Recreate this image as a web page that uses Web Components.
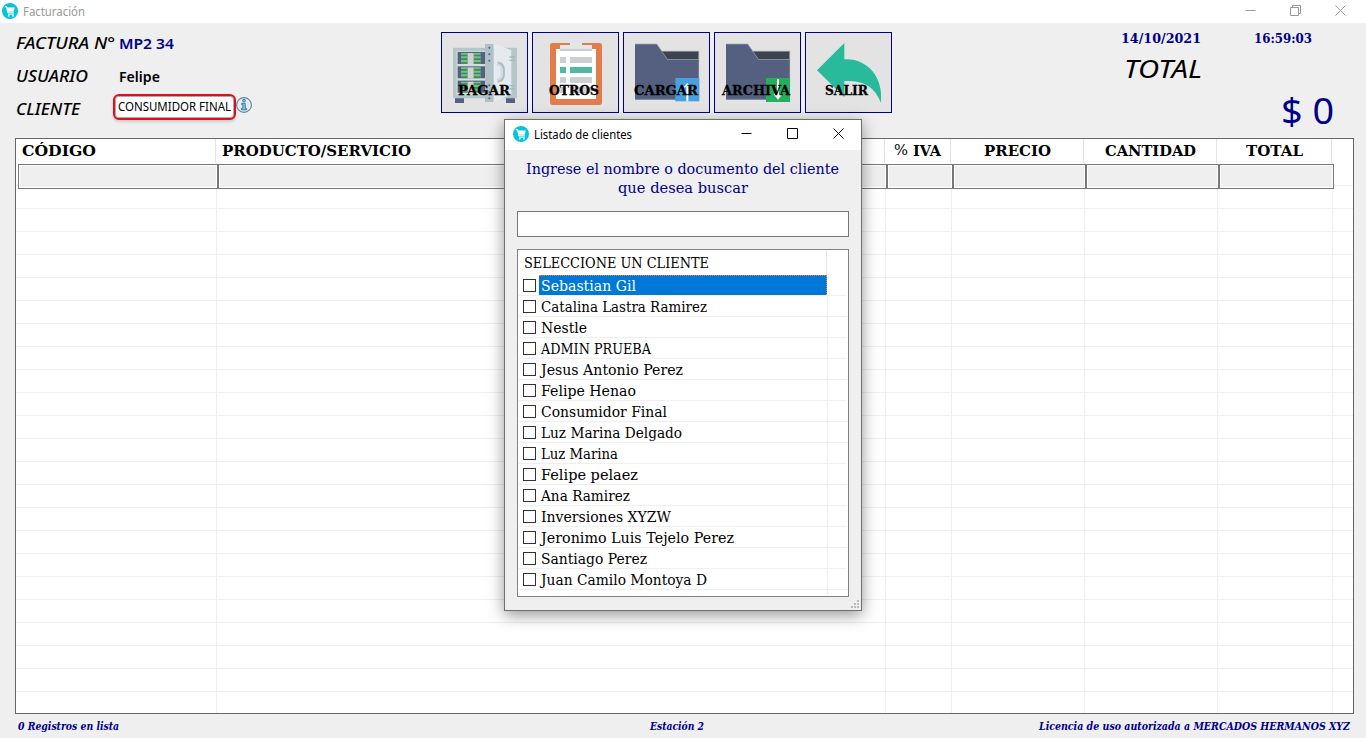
<!DOCTYPE html>
<html lang="es">
<head>
<meta charset="utf-8">
<title>Facturación</title>
<style>
html,body{margin:0;width:1366px;height:738px;overflow:hidden;background:#efefef}
</style>
</head>
<body>
<invoice-app></invoice-app>
<script>
const SLAB = '"DejaVu Serif",serif';
const SANS = '"Noto Sans","Open Sans",sans-serif';

function define(name, html, setup) {
  customElements.define(name, class extends HTMLElement {
    connectedCallback() {
      if (this.shadowRoot) return;
      const root = this.attachShadow({ mode: 'open' });
      const t = document.createElement('template');
      t.innerHTML = typeof html === 'function' ? html(this) : html;
      root.append(t.content.cloneNode(true));
      if (setup) setup(this, root);
    }
  });
}

/* A single line of text fitted to a given width. */
define('fit-text', `
<style>:host{display:block;white-space:nowrap;flex:none}span{display:inline-block;transform-origin:0 50%;vertical-align:top;white-space:pre}</style>
<span><slot></slot></span>`, (el, root) => {
  const w = +el.getAttribute('w');
  const s = root.querySelector('span');
  const n = s.getBoundingClientRect().width;
  el.style.width = w + 'px';
  if (n) s.style.transform = 'scaleX(' + w / n + ')';
});

define('cart-icon', `
<style>:host{display:block;width:16px;height:16px;flex:none}svg{display:block}</style>
<svg width="16" height="16" viewBox="0 0 16 16"><circle cx="8" cy="8" r="8" fill="#06c2da"/>
<path d="M2.8 3.6h1.7l1.4 6.2h6" fill="none" stroke="#fff" stroke-width="1.1"/><path d="M4.8 4.5h8l-1.2 4.2H5.8z" fill="#fff"/>
<path d="M6 11.2h6" stroke="#fff" stroke-width="1"/><circle cx="6.7" cy="12.8" r=".9" fill="#fff"/><circle cx="11" cy="12.8" r=".9" fill="#fff"/></svg>`);

define('info-icon', `
<style>:host{display:block;width:16px;height:16px}svg{display:block}</style>
<svg width="16" height="16" viewBox="0 0 16 16"><circle cx="8" cy="8" r="7.4" fill="#e4eef4" stroke="#5b87a5" stroke-width="1.1"/>
<circle cx="8" cy="3.7" r="1.4" fill="#8fc0de" stroke="#35688c" stroke-width=".8"/>
<path d="M5.6 6.3h3.7v5h1.3v1.6H5.4v-1.6h1.4V7.8H5.6z" fill="#8fc0de" stroke="#35688c" stroke-width=".8"/></svg>`);

const folder = `<path d="M36 36H101L133 82H228V203H36z" fill="#556080"/><path d="M36 36.5H101M133 82.5H227V202M36 202H160" stroke="#8b93a8" stroke-width="2" fill="none"/><path d="M116 58H227V81H133z" fill="#3e4350"/><path d="M116 57.5H227.5V81" fill="none" stroke="#a5a9b1" stroke-width="1.5"/><path d="M101 36L133 82" stroke="#8b93a8" stroke-width="2"/>`;
const bills = y => `<path d="M50 ${y}H134V${y + 36}H50z" fill="#556080"/><path d="M60 ${y + 3}H80V${y + 36}H60zM98 ${y + 3}H119V${y + 36}H98z" fill="#71c285"/>
<path d="M60 ${y + 8}H80V${y + 13}H60zM60 ${y + 19}H80V${y + 24}H60zM60 ${y + 30}H80V${y + 35}H60zM98 ${y + 8}H119V${y + 13}H98zM98 ${y + 19}H119V${y + 24}H98zM98 ${y + 30}H119V${y + 35}H98z" fill="#47855a"/><path d="M80 ${y + 3}H98V${y + 36}H80z" fill="#d0d3ce"/><path d="M50 ${y + 39}H134" stroke="#dce3e6" stroke-width="3"/>`;
const icons = {
  pagar: `<path d="M42 198H69V213H42zM195 198H222V213H195z" fill="#556080"/><rect x="36" y="47" width="192" height="152" rx="3" fill="#b3c6ca"/><path d="M46 56H134V189H46z" fill="#c9d6da"/>${bills(60)}${bills(103)}${bills(146)}
<path d="M132 36H158V210H132z" fill="#afc0c6"/><path d="M158 34L211 55V187L158 210z" fill="#e5eaee"/>
<g fill="#556080"><circle cx="145" cy="47" r="3"/><circle cx="145" cy="67" r="3"/><circle cx="145" cy="86" r="3"/><circle cx="145" cy="160" r="3"/><circle cx="145" cy="180" r="3"/><circle cx="145" cy="199" r="3"/></g>
<path d="M170 93C184 91 189 105 189 121S184 149 170 148" fill="none" stroke="#aebfc6" stroke-width="7"/><path d="M168 99C180 97 182 108 182 121S179 143 168 143" fill="none" stroke="#d0dade" stroke-width="5"/>
<path d="M205 75H221M205 85H221M205 161H221M205 171H221" stroke="#a5b9bf" stroke-width="4"/>`,
  otros: `<rect x="54" y="33" width="156" height="186" rx="8" fill="#e27c4b"/><path d="M72 51H192V201H72z" fill="#fff"/><path d="M84 39H114V27H150V39H180V57H84z" fill="#e4e7e9"/><path d="M84 51H180V57H84z" fill="#c9ccd0"/>
<path d="M84 75H102V93H84zM114 75H180V93H114zM84 135H102V153H84zM114 135H180V153H114zM84 165H102V183H84zM114 165H180V183H114z" fill="#ccd0d3"/><path d="M84 105H102V123H84zM114 105H180V123H114z" fill="#50baa1"/>`,
  cargar: folder + `<path d="M157 138H229V208H157z" fill="#48a0dc"/><path d="M193 208V156" stroke="#fff" stroke-width="6"/><path d="M184 166L193 156L202 166" fill="none" stroke="#fff" stroke-width="4"/>`,
  archiva: folder + `<path d="M156 138H228V210H156z" fill="#24ae5f"/><path d="M192 142V196" stroke="#fff" stroke-width="6"/><path d="M181 185L192 199L203 185" fill="none" stroke="#fff" stroke-width="5"/>`,
  salir: `<path d="M36 115L118 33V82C184 78 236 132 228 212C208 162 173 144 118 147V196z" fill="#29ba9b"/>`
};

define('tool-button', el => `
<style>:host{display:grid;width:87px;height:81px;box-sizing:border-box;border:1px solid #000088;background:#e3e3e3;font:bold 13.5px/18px ${SLAB};color:#000;-webkit-text-stroke:.3px}
svg{grid-area:1/1;margin:-1px}fit-text{grid-area:1/1;align-self:end;margin:0 0 13px ${el.getAttribute('inset')}px}</style>
<svg width="87" height="81" viewBox="0 0 261 243">${icons[el.getAttribute('icon')]}</svg>
<fit-text w="${el.getAttribute('tw')}">${el.getAttribute('label')}</fit-text>`);

define('window-controls', el => {
  const sub = el.hasAttribute('dialog');
  return `<style>:host{display:flex;margin-left:auto;gap:${sub ? 35 : 34}px;color:${sub ? '#000' : '#999'}}svg{display:block;width:11px;height:11px;fill:none;stroke:currentColor;stroke-width:1}</style>
<svg viewBox="0 0 11 11"><path d="M.5 5.5H10.5"/></svg>
<svg viewBox="0 0 11 11">${sub ? '<path d="M.5 .5H10.5V10.5H.5z"/>' : '<path d="M.5 2.5H8.5V10.5H.5zM2.5 2.5V.5H10.5V8.5H8.5"/>'}</svg>
<svg viewBox="0 0 11 11"><path d="M.5 .5L10.5 10.5M10.5 .5L.5 10.5"/></svg>`;
});

define('app-titlebar', `
<style>:host{display:flex;align-items:center;height:23px;box-sizing:border-box;background:#fff;padding:0 20px 0 2px;color:#999;font:12px/22px ${SANS}}fit-text{margin-left:5px}cart-icon{margin-bottom:1px}window-controls{margin-bottom:2px}</style>
<cart-icon></cart-icon><fit-text w="62">Facturación</fit-text><window-controls></window-controls>`);

define('invoice-fields', `
<style>:host{display:grid;grid-template-columns:103px auto;grid-auto-rows:33px;align-content:start;padding:4px 0 0 16px;width:425px;box-sizing:border-box;font:600 14px/33px ${SANS};color:#000}
.l{font:italic 500 15.5px/33px ${SANS}}.n{color:#000088}
.client{display:flex;margin:1px 0 0 -6px}
.box{width:123px;height:26px;box-sizing:border-box;border:2px solid #e01018;border-radius:6px;background:#fff;padding-left:3px;font:12px/22px ${SANS};box-shadow:inset 0 0 0 1px #aaa,0 2px 3px #ccc}
info-icon{margin:3px 0 0 0}</style>
<fit-text class="l" w="99">FACTURA N°</fit-text><fit-text class="n" w="55">MP2 34</fit-text>
<fit-text class="l" w="72">USUARIO</fit-text><fit-text w="41">Felipe</fit-text>
<fit-text class="l" w="64">CLIENTE</fit-text><div class="client"><div class="box"><fit-text w="113">CONSUMIDOR FINAL</fit-text></div><info-icon></info-icon></div>`);

define('invoice-total', `
<style>:host{display:block;width:245px;margin-left:auto;font:bold 13px/20px ${SLAB};color:#000088}
.when{display:flex;gap:53px;padding-top:6px}
.t{font:italic 25px/34px ${SANS};color:#000;margin:2px 0 0 3px}
.v{font:37px/46px ${SANS};margin:2px 0 0 160px}</style>
<div class="when"><fit-text w="80">14/10/2021</fit-text><fit-text w="58">16:59:03</fit-text></div>
<fit-text class="t" w="78">TOTAL</fit-text><fit-text class="v" w="53">$ 0</fit-text>`);

define('item-table', `
<style>:host{display:block;box-sizing:border-box;height:576px;margin:0 12px 0 15px;border:1px solid #666;background:#fff;font:bold 15px/22px ${SLAB};color:#000}
.r{display:grid;grid-template-columns:200px 669px 66px 133px 133px 115px 1fr}
.head{height:24px}.head>div{border-right:1px solid #e4e4e4;padding-top:1px}.head>div:last-child{border:0}
.pct{font:15px/22px ${SLAB};margin-top:-1px}.iva{display:flex;gap:5px}
.body{height:550px;background:repeating-linear-gradient(#0000 0 22px,#efefef 22px 23px)}
.lines,.inputs{grid-area:1/1}
.stack{display:grid;height:550px}
.lines{grid-template-columns:201px 669px 66px 133px 133px 115px 1fr}.lines>i{border-right:1px solid #efefef}.lines>i:last-child{border:0}
.inputs{height:25px;margin:1px 0 0 2px}.inputs>b{border:1px solid #777;background:#efefef;box-shadow:inset 0 0 0 1px #fff}</style>
<div class="r head"><div style="padding-left:6px"><fit-text w="74">CÓDIGO</fit-text></div><div style="padding-left:6px"><fit-text w="189">PRODUCTO/SERVICIO</fit-text></div><div class="iva" style="padding-left:9px"><fit-text class="pct" w="14">%</fit-text><fit-text w="28">IVA</fit-text></div><div style="padding-left:33px"><fit-text w="67">PRECIO</fit-text></div><div style="padding-left:21px"><fit-text w="91">CANTIDAD</fit-text></div><div style="padding-left:29px"><fit-text w="57">TOTAL</fit-text></div><div></div></div>
<div class="body"><div class="stack"><div class="r lines"><i></i><i></i><i></i><i></i><i></i><i></i><i></i></div><div class="r inputs"><b></b><b></b><b></b><b></b><b></b><b></b></div></div></div>`);

define('status-bar', `
<style>:host{display:flex;height:24px;padding:0 16px 0 18px;justify-content:space-between;font:italic bold 10.5px/24px ${SLAB};color:#000088}.m{margin-left:195px}</style>
<fit-text w="101">0 Registros en lista</fit-text><fit-text class="m" w="54">Estación 2</fit-text><fit-text w="311">Licencia de uso autorizada a MERCADOS HERMANOS XYZ</fit-text>`);

define('client-row', el => `
<style>:host{display:flex;height:21px;box-sizing:border-box;border-bottom:1px solid #efefef;padding-left:4px;font:14px/23px ${SLAB};color:#000}
i{width:13px;height:13px;box-sizing:border-box;border:1px solid #333;background:#fff;margin:4px 3px 0 0;flex:none}
div{width:289px;box-sizing:border-box;padding-left:2px;border-right:1px solid #efefef;height:20px}
:host([selected]) div{width:288px;background:#0078d7;color:#fff;border:1px dotted #f08828;border-bottom:0;border-left:0;line-height:20px}</style>
<i></i><div><fit-text w="${el.getAttribute('w')}">${el.getAttribute('name')}</fit-text></div>`);

const clients = [['Sebastian Gil', 95], ['Catalina Lastra Ramirez', 166], ['Nestle', 46], ['ADMIN PRUEBA', 110], ['Jesus Antonio Perez', 142], ['Felipe Henao', 95], ['Consumidor Final', 126], ['Luz Marina Delgado', 141], ['Luz Marina', 77], ['Felipe pelaez', 97], ['Ana Ramirez', 89], ['Inversiones XYZW', 130], ['Jeronimo Luis Tejelo Perez', 193], ['Santiago Perez', 106], ['Juan Camilo Montoya D', 166]];

define('client-dialog', `
<style>:host{display:block;width:358px;height:492px;box-sizing:border-box;border:1px solid #6e6e6e;background:#efefef;box-shadow:0 4px 15px rgba(0,0,0,.42);font:15.5px/19px ${SLAB};color:#000088}
.bar{display:flex;align-items:center;height:30px;background:#fff;padding:0 17px 0 8px;font:12px/28px ${SANS};color:#000}.bar fit-text{margin-left:5px}.bar cart-icon{margin-bottom:2px}.bar window-controls{margin-bottom:3px}
.msg{padding-top:10px;display:flex;flex-direction:column;height:51px}.msg :first-child{margin-left:21px}.msg :last-child{margin-left:113px}
.in{height:26px;box-sizing:border-box;border:1px solid #777;background:#fff;margin:0 12px}
.list{height:348px;box-sizing:border-box;border:1px solid #7d838a;background:#fff;margin:12px 12px 0;padding:0 1px}
.h{height:24px;width:307px;border-right:1px solid #e4e4e4;margin-top:1px;font:14px/24px ${SLAB};color:#000}.h fit-text{margin-left:5px}
.tail{height:5px;width:308px;border-right:1px solid #efefef}
.grip{display:block;margin:3px 2px 0 auto}</style>
<div class="bar"><cart-icon></cart-icon><fit-text w="98">Listado de clientes</fit-text><window-controls dialog></window-controls></div>
<div class="msg"><fit-text w="313">Ingrese el nombre o documento del cliente</fit-text><fit-text w="130">que desea buscar</fit-text></div>
<div class="in"></div>
<div class="list"><div class="h"><fit-text w="185">SELECCIONE UN CLIENTE</fit-text></div>${clients.map(([n, w], i) => `<client-row name="${n}" w="${w}"${i ? '' : ' selected'}></client-row>`).join('')}<div class="tail"></div></div>
<svg class="grip" width="8" height="8" fill="#bcbcbc"><path d="M6 0h2v2h-2zM3 3h2v2h-2zM6 3h2v2h-2zM0 6h2v2h-2zM3 6h2v2h-2zM6 6h2v2h-2z"/></svg>`);

define('invoice-app', `
<style>:host{display:block;position:relative;width:1366px;height:738px;overflow:hidden;background:#efefef}
header{display:flex;height:115px}.tools{display:flex;gap:4px;padding-top:9px;margin-left:16px}
client-dialog{position:absolute;left:504px;top:119px;z-index:5}</style>
<app-titlebar></app-titlebar>
<header><invoice-fields></invoice-fields>
<div class="tools"><tool-button icon="pagar" label="PAGAR" inset="16" tw="52"></tool-button><tool-button icon="otros" label="OTROS" inset="16" tw="50"></tool-button><tool-button icon="cargar" label="CARGAR" inset="10" tw="64"></tool-button><tool-button icon="archiva" label="ARCHIVA" inset="7" tw="68"></tool-button><tool-button icon="salir" label="SALIR" inset="19" tw="43"></tool-button></div>
<invoice-total></invoice-total></header>
<item-table></item-table>
<status-bar></status-bar>
<client-dialog></client-dialog>`);
</script>
</body>
</html>
